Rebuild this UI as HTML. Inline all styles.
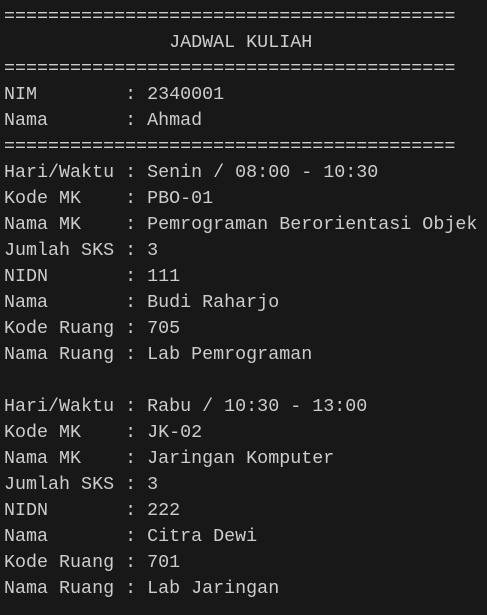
<!DOCTYPE html>
<html><head><meta charset="utf-8"><style>
html,body{margin:0;padding:0;background:#181818;width:487px;height:615px;overflow:hidden}
pre{margin:0;padding:4px 0 0 4px;font-family:"Liberation Mono",monospace;font-size:18.35px;line-height:26px;color:#cccccc}
</style></head><body><pre>=========================================
               JADWAL KULIAH
=========================================
NIM        : 2340001
Nama       : Ahmad
=========================================
Hari/Waktu : Senin / 08:00 - 10:30
Kode MK    : PBO-01
Nama MK    : Pemrograman Berorientasi Objek
Jumlah SKS : 3
NIDN       : 111
Nama       : Budi Raharjo
Kode Ruang : 705
Nama Ruang : Lab Pemrograman

Hari/Waktu : Rabu / 10:30 - 13:00
Kode MK    : JK-02
Nama MK    : Jaringan Komputer
Jumlah SKS : 3
NIDN       : 222
Nama       : Citra Dewi
Kode Ruang : 701
Nama Ruang : Lab Jaringan
</pre></body></html>
